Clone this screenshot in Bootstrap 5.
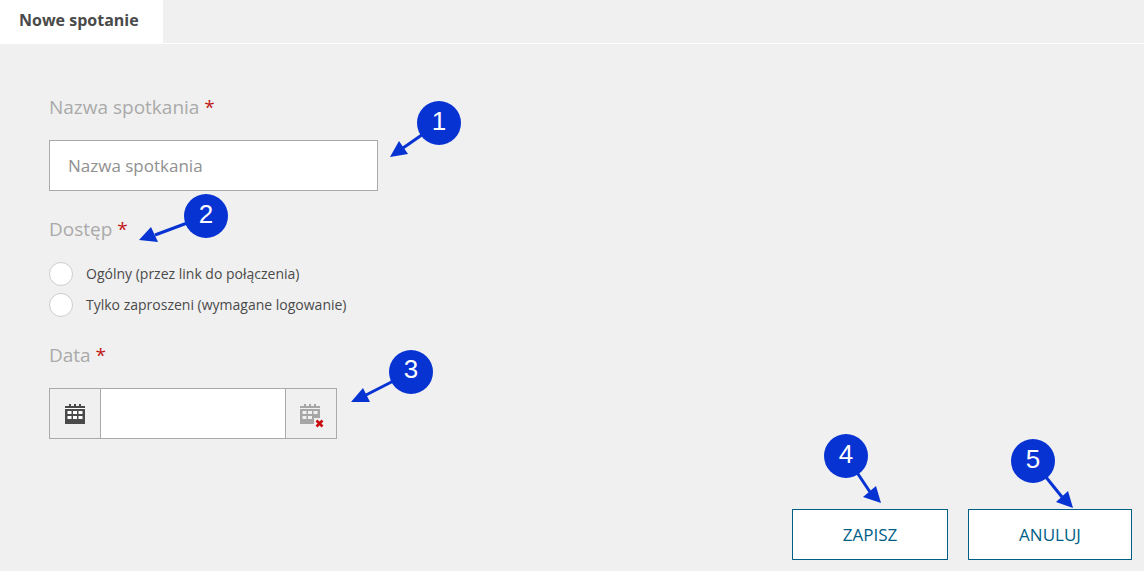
<!DOCTYPE html>
<html lang="pl">
<head>
<meta charset="utf-8">
<title>Nowe spotanie</title>
<link rel="stylesheet" href="https://cdn.jsdelivr.net/npm/bootstrap@5.3.0/dist/css/bootstrap.min.css">
<style>
html,body{height:571px;overflow:hidden}
body{background:#f0f0f0;font-family:"Open Sans",sans-serif;color:#444;position:relative}
.tabbar{height:44px;border-bottom:1px solid #fff}
.tabbar .nav-link{width:163px;height:43px;padding:0 0 0 19px;line-height:40px;background:#fff;color:#4a4a4a;font-size:16px;font-weight:700;border:0;border-radius:0}
.formarea{padding:0 12px 0 49px;height:527px;position:relative}
.field-label{display:block;font-size:19px;line-height:24px;color:#aaa;margin:0}
.field-label b{color:#c01818;font-weight:400}
.lbl-name{padding-top:51px;margin-bottom:21px}
.lbl-access{padding-top:26px;margin-bottom:21px}
.lbl-date{padding-top:19px;margin-bottom:21px}
.text-input.form-control{width:329px;height:51px;border:1px solid #aaa;border-radius:0;padding:0 18px;font-size:17px;background:#fff;color:#444}
.text-input.form-control::placeholder{color:#909090;opacity:1}
.radio-row.form-check{display:flex;align-items:center;height:24px;min-height:0;margin:0 0 7px;padding:0}
.radio-row .form-check-input{width:24px;height:24px;margin:0 13px 0 0;float:none;border:1px solid #ccc;background-color:#fff}
.radio-row .form-check-label{font-size:14px;color:#4a4a4a;padding-bottom:2px}
.date-group.input-group{width:288px;height:51px;flex-wrap:nowrap}
.date-group .input-group-text{width:52px;justify-content:center;padding:0;background:#f0f0f0;border:1px solid #aaa;border-radius:0}
.date-group .form-control{border:1px solid #aaa;border-left:0;border-right:0;border-radius:0;background:#fff;margin:0!important;height:51px}
.date-group .input-group-text:first-child{width:52px}
.date-group .input-group-text:last-child{width:52px;margin:0!important}
.actions{position:absolute;top:465px;right:12px;display:flex;gap:20px}
.actions .btn{height:51px;background:#fff;border:1px solid #005f87;border-radius:0;color:#005f87;font-size:17px;padding:0;display:flex;align-items:center;justify-content:center}
.btn-save{width:156px}
.btn-cancel{width:164px}
.callouts{position:absolute;left:0;top:0;width:1144px;height:571px;pointer-events:none}
.callouts text{font-family:"Liberation Sans",sans-serif;font-size:26px;fill:#fff;text-anchor:middle}
</style>
</head>
<body>
<div class="tabbar">
  <ul class="nav"><li class="nav-item"><a class="nav-link active" href="#">Nowe spotanie</a></li></ul>
</div>
<form class="formarea">
  <label class="field-label lbl-name" for="nm">Nazwa spotkania <b>*</b></label>
  <input id="nm" class="form-control text-input" type="text" placeholder="Nazwa spotkania">
  <div class="field-label lbl-access">Dostęp <b>*</b></div>
  <div class="form-check radio-row"><input class="form-check-input" type="radio" name="a" id="a1"><label class="form-check-label" for="a1">Ogólny (przez link do połączenia)</label></div>
  <div class="form-check radio-row"><input class="form-check-input" type="radio" name="a" id="a2"><label class="form-check-label" for="a2">Tylko zaproszeni (wymagane logowanie)</label></div>
  <div class="field-label lbl-date">Data <b>*</b></div>
  <div class="input-group date-group">
    <span class="input-group-text">
      <svg width="22" height="21" viewBox="0 0 22 21"><path fill="#4a4a4a" d="M5 1h2v2H5zM10 1h2v2h-2zM15 1h2v2h-2z"/><path fill="#4a4a4a" d="M1 3h20v18H1z"/><path fill="#fff" d="M1 5h20v1H1zM3.500 8h4v3h-4zM9 8h4v3H9zM14.500 8h4v3h-4zM3.500 13h4v3h-4zM9 13h4v3H9zM14.500 13h4v3h-4z"/></svg>
    </span>
    <input type="text" class="form-control" aria-label="Data">
    <span class="input-group-text">
      <svg width="28" height="29" viewBox="-2 -4 28 29"><path fill="#a6a6a6" d="M5 1h2v2H5zM10 1h2v2h-2zM15 1h2v2h-2z"/><path fill="#a6a6a6" d="M1 3h20v18H1z"/><path fill="#f0f0f0" d="M1 5h20v1H1zM3.500 8h4v3h-4zM9 8h4v3H9zM14.500 8h4v3h-4zM3.500 13h4v3h-4zM9 13h4v3H9z"/><path fill="#f0f0f0" d="M15 15h11v10H15z"/><path stroke="#c60c0c" stroke-width="2.600" d="M17.500 17.500l6 6m0-6l-6 6"/></svg>
    </span>
  </div>
  <div class="actions">
    <button type="button" class="btn btn-save">ZAPISZ</button>
    <button type="button" class="btn btn-cancel">ANULUJ</button>
  </div>
</form>
<svg class="callouts" viewBox="0 0 1144 571">
  <g stroke="#0733d3" stroke-width="3" fill="none">
    <path d="M439 123L403 148"/>
    <path d="M206 216L155 235"/>
    <path d="M411 372L366 395"/>
    <path d="M846 456L870 492"/>
    <path d="M1033 461L1062 497"/>
  </g>
  <g fill="#0733d3">
    <path d="M390 157L399 141L408 154Z"/>
    <path d="M139 240L151 227L158 242Z"/>
    <path d="M351 402L363 388L370 402Z"/>
    <path d="M881 503L863 497L876 486Z"/>
    <path d="M1073 508L1056 502L1068 491Z"/>
    <circle cx="439" cy="123" r="22"/><circle cx="206" cy="216" r="22"/><circle cx="411" cy="372" r="22"/><circle cx="846" cy="456" r="22"/><circle cx="1033" cy="461" r="22"/>
  </g>
  <text x="439" y="130">1</text><text x="206" y="223">2</text><text x="411" y="378">3</text><text x="846" y="463">4</text><text x="1033" y="468">5</text>
</svg>
<script src="https://cdn.jsdelivr.net/npm/bootstrap@5.3.0/dist/js/bootstrap.bundle.min.js"></script>
</body>
</html>
